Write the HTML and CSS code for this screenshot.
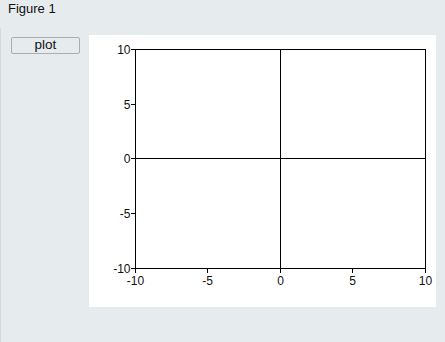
FILE: index.html
```html
<!DOCTYPE html>
<html lang="en">
<head>
  <meta charset="UTF-8" />
  <title>Figure 1</title>
  <link rel="stylesheet" href="styles.css">
</head>
<body>
  <div class="title">Figure 1</div>

  <div class="figure">
    <div class="controls">
      <button class="plot-btn">plot</button>
    </div>

    <div class="canvas">
      <svg width="347" height="272" viewBox="0 0 347 272">
        <!-- axes box -->
        <rect x="46.5" y="14.5" width="290" height="219" fill="none" stroke="#000" />
        <!-- crosshair -->
        <line x1="191.5" y1="14" x2="191.5" y2="234" stroke="#000" />
        <line x1="46" y1="123.5" x2="337" y2="123.5" stroke="#000" />

        <!-- y ticks -->
        <g stroke="#000">
          <line x1="42" y1="14.5" x2="46" y2="14.5" />
          <line x1="42" y1="69.5" x2="46" y2="69.5" />
          <line x1="42" y1="123.5" x2="46" y2="123.5" />
          <line x1="42" y1="178.5" x2="46" y2="178.5" />
          <line x1="42" y1="233.5" x2="46" y2="233.5" />
        </g>
        <g class="tick-label" text-anchor="end">
          <text x="41.5" y="18.5">10</text>
          <text x="41.5" y="73.5">5</text>
          <text x="41.5" y="127.5">0</text>
          <text x="41.5" y="182.5">-5</text>
          <text x="41.5" y="237.5">-10</text>
        </g>

        <!-- x ticks -->
        <g stroke="#000">
          <line x1="46.5" y1="234" x2="46.5" y2="238" />
          <line x1="118.5" y1="234" x2="118.5" y2="238" />
          <line x1="191.5" y1="234" x2="191.5" y2="238" />
          <line x1="263.5" y1="234" x2="263.5" y2="238" />
          <line x1="336.5" y1="234" x2="336.5" y2="238" />
        </g>
        <g class="tick-label" text-anchor="middle">
          <text x="46.5" y="249.5">-10</text>
          <text x="118.5" y="249.5">-5</text>
          <text x="191.5" y="249.5">0</text>
          <text x="263.5" y="249.5">5</text>
          <text x="336.5" y="249.5">10</text>
        </g>
      </svg>
    </div>
  </div>
</body>
</html>
```

FILE: styles.css
```css
:root {
  --bg: #e6ebee;
  --edge: #d3d9dc;
  --btn-border: #adadad;
}

body {
  margin: 0;
  height: 342px;
  background: var(--bg);
  font-family: 'Liberation Sans', Arial, sans-serif;
  color: #111;
  overflow: hidden;
  display: flex;
  flex-direction: column;
}

.title {
  height: 28px;
  padding-left: 8px;
  font-size: 13px;
  line-height: 17px;
}

.figure {
  flex: 1;
  display: flex;
  gap: 9px;
  padding: 7px 0 0 10px;
  border-left: 1px solid var(--edge);
}

.plot-btn {
  width: 69px;
  height: 17px;
  padding: 0;
  background: var(--bg);
  border: 1px solid var(--btn-border);
  border-radius: 2px;
  font-family: 'Liberation Sans', Arial, sans-serif;
  font-size: 13.5px;
  line-height: 14px;
  color: #111;
}

.canvas {
  width: 347px;
  height: 272px;
  background: #fff;
}

.canvas svg {
  display: block;
}

.tick-label {
  font-family: 'Liberation Sans', Arial, sans-serif;
  font-size: 12px;
  fill: #111;
}
```
